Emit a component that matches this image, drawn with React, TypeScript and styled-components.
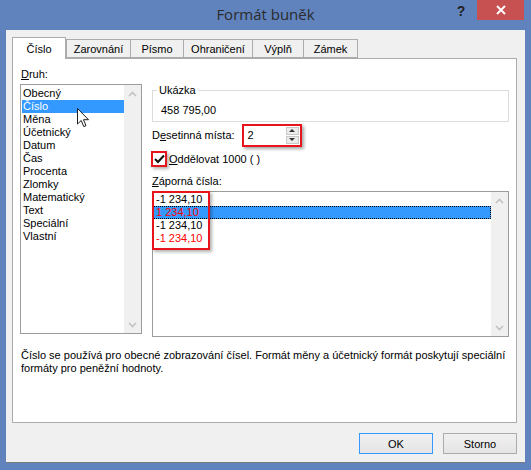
import React from 'react';
import styled, { createGlobalStyle } from 'styled-components';

const GlobalStyle = createGlobalStyle`
  html, body {
    margin: 0;
    padding: 0;
    background: #6083be;
  }
  * {
    box-sizing: border-box;
  }
`;

const druhy = [
  'Obecný',
  'Číslo',
  'Měna',
  'Účetnický',
  'Datum',
  'Čas',
  'Procenta',
  'Zlomky',
  'Matematický',
  'Text',
  'Speciální',
  'Vlastní',
];

const tabs = [
  { label: 'Číslo', width: 54 },
  { label: 'Zarovnání', width: 65 },
  { label: 'Písmo', width: 54 },
  { label: 'Ohraničení', width: 70 },
  { label: 'Výplň', width: 52 },
  { label: 'Zámek', width: 55 },
];

const zaporna = [
  { text: '-1 234,10', red: false },
  { text: '1 234,10', red: true },
  { text: '-1 234,10', red: false },
  { text: '-1 234,10', red: true },
];

const Chevron = ({ down }: { down?: boolean }) => (
  <svg width="9" height="6" viewBox="0 0 9 6">
    <path
      d={down ? 'M1 1 L4.5 4.5 L8 1' : 'M1 5 L4.5 1.5 L8 5'}
      fill="none"
      stroke="#c2c2c2"
      strokeWidth="1.6"
    />
  </svg>
);

const App = () => {
  return (
    <>
      <GlobalStyle />
      <Window>
        <TitleBar>
          <span />
          <Title>Formát buněk</Title>
          <TitleActions>
            <HelpButton>?</HelpButton>
            <CloseButton>
              <svg width="10" height="10" viewBox="0 0 10 10">
                <path d="M1 1 L9 9 M9 1 L1 9" stroke="#fff" strokeWidth="2" />
              </svg>
            </CloseButton>
          </TitleActions>
        </TitleBar>

        <Body>
          <TabRow>
            {tabs.map((t, i) => (
              <Tab key={t.label} $active={i === 0} $width={t.width}>
                {t.label}
              </Tab>
            ))}
          </TabRow>

          <Panel>
            <Columns>
              <LeftColumn>
                <Label>
                  <u>D</u>ruh:
                </Label>
                <ListBox $height={250}>
                  <ListItems $pad={2}>
                    {druhy.map((d, i) => (
                      <CategoryItem key={d} $selected={i === 1}>
                        {d}
                      </CategoryItem>
                    ))}
                  </ListItems>
                  <ScrollBar>
                    <Chevron />
                    <Chevron down />
                  </ScrollBar>
                  <Cursor>
                    <svg width="13" height="20" viewBox="0 0 13 20">
                      <path
                        d="M0.5 0.5 L0.5 16 L4.2 12.5 L6.8 18.6 L9 17.7 L6.5 11.7 L11.5 11.7 Z"
                        fill="#fff"
                        stroke="#1e1e1e"
                        strokeWidth="1"
                        strokeLinejoin="round"
                      />
                    </svg>
                  </Cursor>
                </ListBox>
              </LeftColumn>

              <RightColumn>
                <Sample>
                  <SampleLegend>Ukázka</SampleLegend>
                  <SampleValue>458 795,00</SampleValue>
                </Sample>

                <DecimalRow>
                  <span>
                    D<u>e</u>setinná místa:
                  </span>
                  <Highlight>
                    <SpinInput>
                      <SpinValue>2</SpinValue>
                      <SpinButtons>
                        <SpinButton>
                          <Triangle />
                        </SpinButton>
                        <SpinButton>
                          <Triangle $down />
                        </SpinButton>
                      </SpinButtons>
                    </SpinInput>
                  </Highlight>
                </DecimalRow>

                <CheckRow>
                  <CheckBox>
                    <svg width="11" height="10" viewBox="0 0 11 10">
                      <path
                        d="M1 5 L4 8 L10 1.5"
                        fill="none"
                        stroke="#111"
                        strokeWidth="2"
                      />
                    </svg>
                  </CheckBox>
                  <span>
                    <u>O</u>ddělovat 1000 ( )
                  </span>
                </CheckRow>

                <NegLabel>
                  <u>Z</u>áporná čísla:
                </NegLabel>
                <ListBox $height={146}>
                  <ListItems $pad={1}>
                    {zaporna.map((z, i) => (
                      <NumberItem key={i} $red={z.red} $selected={i === 1}>
                        {z.text}
                      </NumberItem>
                    ))}
                  </ListItems>
                  <ScrollBar>
                    <Chevron />
                    <Chevron down />
                  </ScrollBar>
                  <ItemsMark />
                </ListBox>
              </RightColumn>
            </Columns>

            <Description>
              Číslo se používá pro obecné zobrazování čísel. Formát měny a účetnický formát poskytují speciální
              <br />
              formáty pro peněžní hodnoty.
            </Description>
          </Panel>

          <ButtonRow>
            <DialogButton $default>OK</DialogButton>
            <DialogButton>Storno</DialogButton>
          </ButtonRow>
        </Body>
      </Window>
    </>
  );
};

const Window = styled.div`
  width: 531px;
  height: 470px;
  background: #6083be;
  display: flex;
  flex-direction: column;
  font-family: 'Liberation Sans', Arial, sans-serif;
  font-size: 11px;
  color: #000;
  overflow: hidden;
`;

const TitleBar = styled.div`
  height: 30px;
  display: grid;
  grid-template-columns: 1fr auto 1fr;
  align-items: start;
`;

const Title = styled.div`
  font-family: 'Open Sans', 'Noto Sans', sans-serif;
  font-size: 15px;
  color: #2b2b2b;
  line-height: 28px;
`;

const TitleActions = styled.div`
  display: flex;
  justify-content: flex-end;
  align-items: flex-start;
  padding-right: 7px;
`;

const HelpButton = styled.div`
  width: 26px;
  height: 20px;
  font-family: 'Liberation Sans', Arial, sans-serif;
  font-weight: bold;
  font-size: 14px;
  color: #222;
  line-height: 22px;
  text-align: center;
  margin-right: 3px;
`;

const CloseButton = styled.div`
  width: 47px;
  height: 20px;
  background: #c75050;
  display: flex;
  align-items: center;
  justify-content: center;
`;

const Body = styled.div`
  margin: 0 6px;
  height: 433px;
  background: #f0f0f0;
  border-bottom: 1px solid #7a7a7a;
  padding: 7px 8px 0 6px;
  display: flex;
  flex-direction: column;
`;

const TabRow = styled.div`
  display: flex;
  align-items: flex-end;
  height: 21px;
  position: relative;
  z-index: 1;
`;

const Tab = styled.div<{ $active?: boolean; $width: number }>`
  width: ${(p) => p.$width}px;
  height: ${(p) => (p.$active ? 22 : 19)}px;
  margin-bottom: ${(p) => (p.$active ? -1 : 0)}px;
  background: ${(p) => (p.$active ? '#fff' : '#f0f0f0')};
  border: 1px solid #acacac;
  border-bottom: ${(p) => (p.$active ? 'none' : '1px solid #acacac')};
  margin-left: -1px;
  display: flex;
  align-items: center;
  justify-content: center;
  padding-top: ${(p) => (p.$active ? 1 : 0)}px;

  &:first-child,
  &:nth-child(2) {
    margin-left: 0;
  }
`;

const Panel = styled.div`
  height: 365px;
  background: #fff;
  border: 1px solid #acacac;
  padding: 9px 7px 0 7px;
  display: flex;
  flex-direction: column;
`;

const Columns = styled.div`
  display: flex;
  gap: 10px;
`;

const LeftColumn = styled.div`
  width: 122px;
  display: flex;
  flex-direction: column;
  gap: 3px;
`;

const RightColumn = styled.div`
  flex: 1;
  display: flex;
  flex-direction: column;
  padding-top: 16px;
`;

const Label = styled.div`
  line-height: 13px;
  padding-left: 1px;
`;

const ListBox = styled.div<{ $height: number }>`
  position: relative;
  height: ${(p) => p.$height}px;
  border: 1px solid #9c9c9c;
  background: #fff;
  display: flex;
`;

const ListItems = styled.div<{ $pad: number }>`
  flex: 1;
  padding-top: ${(p) => p.$pad}px;
  display: flex;
  flex-direction: column;
`;

const CategoryItem = styled.div<{ $selected?: boolean }>`
  height: 13px;
  line-height: 13px;
  margin-left: 1px;
  padding-left: 1px;
  background: ${(p) => (p.$selected ? '#3399ff' : 'transparent')};
  color: ${(p) => (p.$selected ? '#fff' : '#000')};
`;

const NumberItem = styled.div<{ $selected?: boolean; $red?: boolean }>`
  height: 13px;
  line-height: 11px;
  padding-left: 2px;
  color: ${(p) => (p.$red ? '#ff0000' : '#000')};
  background: ${(p) => (p.$selected ? '#3399ff' : 'transparent')};
  border: 1px ${(p) => (p.$selected ? 'dotted #000' : 'solid transparent')};
`;

const ScrollBar = styled.div`
  width: 17px;
  background: #f0f0f0;
  display: flex;
  flex-direction: column;
  justify-content: space-between;
  align-items: center;
  padding: 6px 0 5px;
`;

const Cursor = styled.div`
  position: absolute;
  left: 56px;
  top: 23px;
  line-height: 0;
`;

const Sample = styled.fieldset`
  margin: 0;
  border: 1px solid #dcdcdc;
  padding: 0 0 4px 8px;
`;

const SampleLegend = styled.legend`
  padding: 0 2px;
  margin-left: -4px;
  line-height: 13px;
`;

const SampleValue = styled.div`
  line-height: 13px;
  margin-top: 7px;
`;

const DecimalRow = styled.div`
  display: flex;
  align-items: center;
  gap: 7px;
  margin-top: 1px;
  height: 24px;
`;

const Highlight = styled.div`
  border: 2px solid #e8141b;
  box-shadow: 2px 2px 3px rgba(0, 0, 0, 0.35);
  padding: 1px;
  background: #fff;
`;

const SpinInput = styled.div`
  width: 54px;
  height: 17px;
  display: flex;
  background: #fff;
`;

const SpinValue = styled.div`
  flex: 1;
  padding-left: 3px;
  line-height: 17px;
`;

const SpinButtons = styled.div`
  width: 13px;
  display: flex;
  flex-direction: column;
  gap: 1px;
`;

const SpinButton = styled.div`
  flex: 1;
  background: #ececec;
  border: 1px solid #c8c8c8;
  display: flex;
  align-items: center;
  justify-content: center;
`;

const Triangle = styled.div<{ $down?: boolean }>`
  width: 0;
  height: 0;
  border-left: 3px solid transparent;
  border-right: 3px solid transparent;
  ${(p) => (p.$down ? 'border-top: 3px solid #333;' : 'border-bottom: 3px solid #333;')}
`;

const CheckRow = styled.div`
  display: flex;
  align-items: center;
  gap: 2px;
  margin-top: 4px;
  height: 16px;
  margin-left: -1px;
`;

const CheckBox = styled.div`
  width: 16px;
  height: 16px;
  border: 2px solid #e8141b;
  box-shadow: 2px 2px 3px rgba(0, 0, 0, 0.3);
  background: #fff;
  display: flex;
  align-items: center;
  justify-content: center;
`;

const NegLabel = styled.div`
  line-height: 13px;
  margin-top: 8px;
  margin-bottom: 3px;
`;

const ItemsMark = styled.div`
  position: absolute;
  left: -1px;
  top: -1px;
  width: 58px;
  height: 59px;
  border: 2px solid #e8141b;
  box-shadow: 2px 2px 3px rgba(0, 0, 0, 0.3);
`;

const Description = styled.div`
  margin-top: 12px;
  line-height: 13px;
  padding-left: 1px;
`;

const ButtonRow = styled.div`
  display: flex;
  justify-content: flex-end;
  gap: 10px;
  margin-top: 10px;
`;

const DialogButton = styled.div<{ $default?: boolean }>`
  width: 74px;
  height: 21px;
  border: 1px solid ${(p) => (p.$default ? '#3399ff' : '#acacac')};
  background: linear-gradient(#f0f0f0, #e5e5e5);
  display: flex;
  align-items: center;
  justify-content: center;
`;

export default App;
